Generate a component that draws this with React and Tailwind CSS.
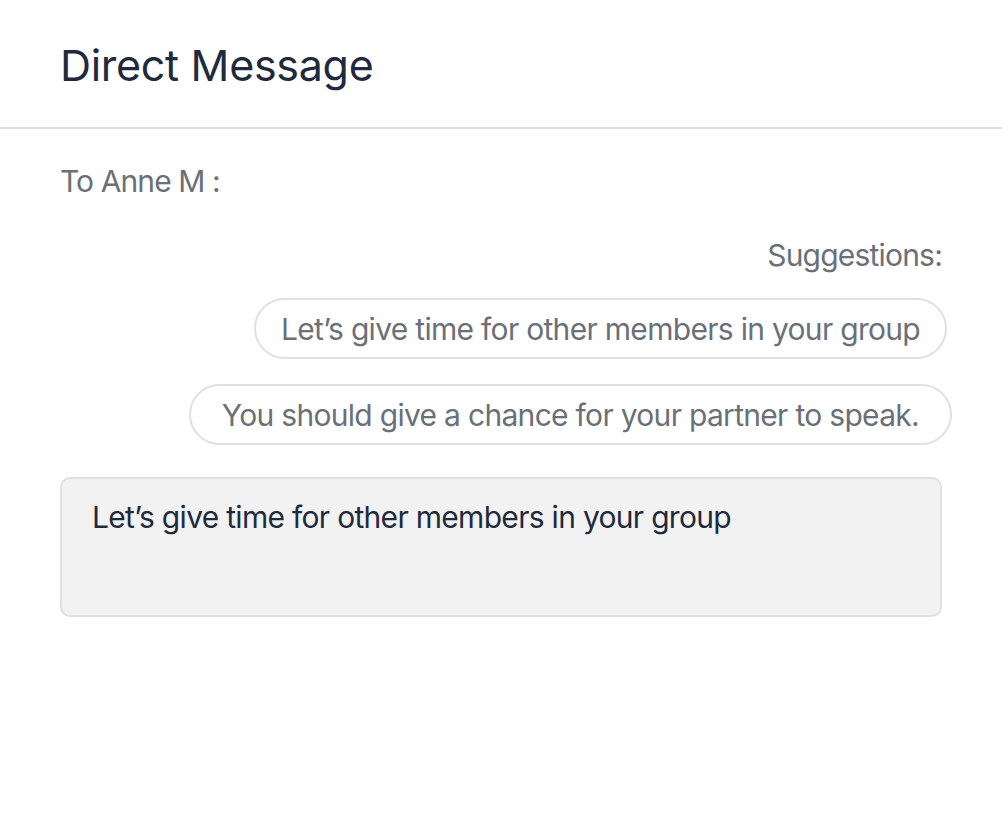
import React, { useState } from "react";

const suggestions = [
  { text: "Let\u2019s give time for other members in your group", cls: "mr-[-5px] px-[25px]" },
  { text: "You should give a chance for your partner to speak.", cls: "mr-[-10px] px-[31px]" },
];

const App = () => {
  const [message, setMessage] = useState(suggestions[0].text);

  return (
    <div className="min-h-[826px] w-[1002px] bg-white font-['Inter',sans-serif]">
      <header className="h-[129px] border-b-2 border-[#e0e0e0] px-[60px] pt-[39px]">
        <h1 className="text-[43px] leading-[52px] text-[#1f2a3d] tracking-[-0.3px]">Direct Message</h1>
      </header>

      <div className="px-[60px]">
        <p className="mt-[34px] text-[30px] leading-[36px] tracking-[-0.9px] text-[#6b7078]">To Anne M :</p>

        <div className="mt-[38px] flex flex-col items-end">
          <p className="text-[30px] leading-[36px] tracking-[-0.8px] text-[#6b7078]">Suggestions:</p>
          <div className="mt-[25px] flex flex-col items-end gap-[25px] w-full">
            {suggestions.map((s) => (
              <button
                key={s.text}
                type="button"
                onClick={() => setMessage(s.text)}
                className={`${s.cls} h-[61px] rounded-full border-2 border-[#e0e0e0] bg-white text-[30px] leading-[36px] tracking-[-0.7px] text-[#6b7078]`}
              >
                {s.text}
              </button>
            ))}
          </div>
        </div>

        <textarea
          value={message}
          onChange={(e) => setMessage(e.target.value)}
          className="mt-[32px] block h-[140px] w-full resize-none rounded-[10px] border-2 border-[#e0e0e0] bg-[#f2f2f2] px-[30px] py-[20px] text-[30px] leading-[36px] tracking-[-0.7px] text-[#1f2a3d] outline-none"
        />
      </div>
    </div>
  );
};

export default App;
